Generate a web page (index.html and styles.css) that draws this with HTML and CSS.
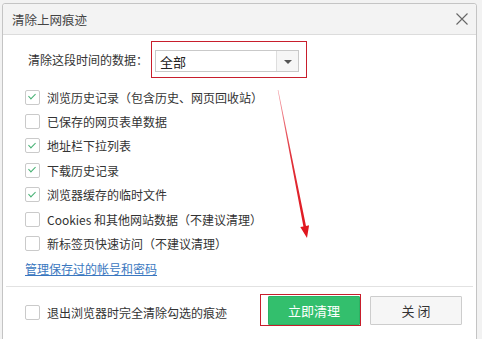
FILE: index.html
```html
<!DOCTYPE html>
<html>
    <head>
        <meta charset="utf-8"/>
        <link rel="stylesheet" href="styles.css">
    </head>
    <body>
        <div class="dialog">
            <header class="titlebar">
                <span>清除上网痕迹</span>
                <svg class="close-icon" width="12" height="12" viewBox="0 0 12 12">
                    <path d="M0.5 0.5 L11.5 11.5 M11.5 0.5 L0.5 11.5" stroke="#666" stroke-width="1.1" fill="none"/>
                </svg>
            </header>

            <main class="content">
                <div class="range-row">
                    <span>清除这段时间的数据：</span>
                    <div class="highlight select-highlight">
                        <div class="select">
                            <span class="select-value">全部</span>
                            <span class="select-arrow"></span>
                        </div>
                    </div>
                </div>

                <ul class="options">
                    <li><span class="checkbox checked"></span>浏览历史记录（包含历史、网页回收站）</li>
                    <li><span class="checkbox"></span>已保存的网页表单数据</li>
                    <li><span class="checkbox checked"></span>地址栏下拉列表</li>
                    <li><span class="checkbox checked"></span>下载历史记录</li>
                    <li><span class="checkbox checked"></span>浏览器缓存的临时文件</li>
                    <li><span class="checkbox"></span>Cookies 和其他网站数据（不建议清理）</li>
                    <li><span class="checkbox"></span>新标签页快速访问（不建议清理）</li>
                </ul>

                <a class="manage-link" href="#">管理保存过的帐号和密码</a>
            </main>

            <footer class="footer">
                <label class="exit-option"><span class="checkbox"></span>退出浏览器时完全清除勾选的痕迹</label>
                <div class="buttons">
                    <div class="highlight button-highlight">
                        <button class="btn btn-primary">立即清理</button>
                    </div>
                    <button class="btn btn-close">关 闭</button>
                </div>
            </footer>
        </div>

        <!-- annotation arrow -->
        <svg class="arrow" width="482" height="339" viewBox="0 0 482 339">
            <defs>
                <linearGradient id="arrow-fade" x1="0" y1="90" x2="0" y2="238" gradientUnits="userSpaceOnUse">
                    <stop offset="0" stop-color="#f4a0a8"/>
                    <stop offset="0.45" stop-color="#e0313a"/>
                    <stop offset="1" stop-color="#e0141c"/>
                </linearGradient>
            </defs>
            <polygon points="278.3,89.9 277.7,90.1 303.4,226.5 300.3,227.1 307,238 309.1,225.3 306,226" fill="url(#arrow-fade)"/>
        </svg>
    </body>
</html>
```

FILE: styles.css
```css
body {
    margin: 0;
    padding: 0;
    background: #f2f2f2;
    font-family: "Noto Sans CJK SC", "Liberation Sans", sans-serif;
    font-size: 12px;
    color: #333;
    overflow: hidden;
}

.dialog {
    margin: 3px 0 0 2px;
    width: 473px;
    height: 345px;
    background: #fff;
    border: 1px solid #c4c4c4;
    border-radius: 3px 3px 0 0;
    display: flex;
    flex-direction: column;
}

.titlebar {
    height: 30px;
    background: #f3f3f3;
    border-bottom: 1px solid #dcdcdc;
    border-radius: 3px 3px 0 0;
    padding: 0 8px 0 9px;
    display: flex;
    align-items: center;
    justify-content: space-between;
    font-size: 12.5px;
    color: #444;
}

.content {
    padding: 6px 0 0 22px;
}

.range-row {
    display: flex;
    align-items: center;
    padding-left: 3px;
}

.range-row > span {
    margin-right: 3px;
}

.highlight {
    border: 1px solid #c81e2c;
}

.select-highlight {
    padding: 8px 7px 5px 3px;
}

.select {
    width: 142px;
    height: 20px;
    border: 1px solid #c9c9c9;
    display: flex;
    align-items: center;
}

.select-value {
    flex: 1;
    padding-left: 4px;
    font-size: 13px;
    color: #222;
}

.select-arrow {
    width: 21px;
    height: 20px;
    border-left: 1px solid #dedede;
    background: #f6f6f6;
    position: relative;
}

.select-arrow::after {
    content: "";
    position: absolute;
    left: 7px;
    top: 9px;
    border-left: 4px solid transparent;
    border-right: 4px solid transparent;
    border-top: 4px solid #555;
}

.options {
    list-style: none;
    margin: 7px 0 0 0;
    padding: 0;
}

.options li {
    height: 24.4px;
    display: flex;
    align-items: center;
    color: #333;
}

.checkbox {
    width: 13px;
    height: 13px;
    border: 1px solid #cacaca;
    border-radius: 2px;
    background: #fff;
    margin-right: 7px;
    position: relative;
    flex-shrink: 0;
}

.checkbox.checked::after {
    content: "";
    position: absolute;
    left: 4px;
    top: 1.5px;
    width: 3px;
    height: 6px;
    border-right: 1.6px solid #45b072;
    border-bottom: 1.6px solid #45b072;
    transform: rotate(45deg);
}

.manage-link {
    display: block;
    margin-top: 3px;
    line-height: 20px;
    color: #3a77c0;
    text-decoration: underline;
}

.footer {
    margin: 7px 3px 0 3px;
    border-top: 1px solid #e2e2e2;
    padding: 7px 11px 0 19px;
    display: flex;
    align-items: flex-start;
}

.exit-option {
    display: flex;
    align-items: center;
    margin-top: 9px;
    height: 20px;
}

.buttons {
    margin-left: auto;
    display: flex;
    align-items: flex-start;
}

.button-highlight {
    padding: 1px 0 0 7px;
    height: 29px;
}

.btn {
    width: 92px;
    height: 29px;
    font-family: inherit;
    font-size: 13px;
    border-radius: 1px;
    cursor: pointer;
}

.btn-primary {
    background: #33bf6d;
    border: 1px solid #2cb264;
    color: #fff;
}

.btn-close {
    margin: 2px 0 0 9px;
    background: #f6f6f6;
    border: 1px solid #cdcdcd;
    color: #333;
}

.arrow {
    position: absolute;
    left: 0;
    top: 0;
    pointer-events: none;
}
```
